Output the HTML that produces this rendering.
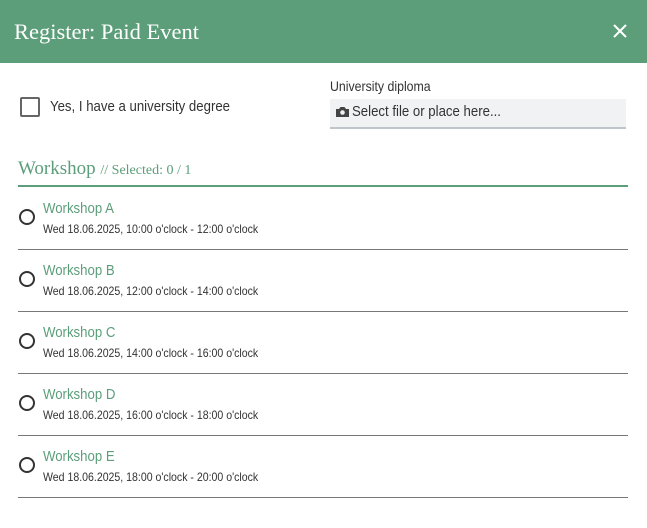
<html><head><style>
body{margin:0;width:647px;height:528px;background:#fff;font-family:"Liberation Sans",sans-serif;position:relative;overflow:hidden;color:#333}
.hd{position:absolute;left:0;top:0;width:647px;height:63px;background:#5b9e79}
.hd .t{position:absolute;left:14px;top:19px;font:22.5px "Liberation Serif",serif;color:#fff}
.a,.n,.d{position:absolute;white-space:nowrap;transform:scaleX(0.88);transform-origin:0 0}
.cb{position:absolute;left:20px;top:97px;width:16px;height:16px;border:2px solid #666;border-radius:2px}
.fi{position:absolute;left:330px;top:99px;width:296px;height:28px;background:#f1f2f4;border-bottom:2px solid #c0c4cb}
.it{position:absolute;left:18px;width:610px;height:62px;border-bottom:1px solid #777}
.r{position:absolute;left:1px;top:22px;width:12px;height:12px;border:2px solid #333;border-radius:50%}
.n{left:25px;top:13px;font-size:15px;color:#5b9e79}
.d{left:25px;top:35px;font-size:12px;color:#333}
</style></head><body>
<div class="hd"><div class="t">Register: Paid Event</div>
<svg style="position:absolute;left:613px;top:24px" width="14" height="14"><path d="M1 1L13 13M13 1L1 13" stroke="#fff" stroke-width="2"/></svg></div>
<div class="cb"></div>
<div class="a" style="left:50px;top:98px;font-size:15px">Yes, I have a university degree</div>
<div class="a" style="left:330px;top:78px;font-size:14px">University diploma</div>
<div class="fi"><svg style="position:absolute;left:6px;top:7px" width="13" height="11"><path d="M0 3h3l1.5-2h4L10 3h3v8H0z" fill="#444"/><circle cx="6.5" cy="6.5" r="2.3" fill="#f1f2f4"/></svg>
<div class="a" style="left:22px;top:4px;font-size:15px">Select file or place here...</div></div>
<div style="position:absolute;white-space:nowrap;left:18px;top:158px;font:19px 'Liberation Serif',serif;color:#5b9e79">Workshop <span style="font-size:14px">// Selected: 0 / 1</span></div>
<div style="position:absolute;left:18px;top:185px;width:610px;height:2px;background:#5b9e79"></div>
<div class="it" style="top:187px"><div class="r"></div><div class="n">Workshop A</div><div class="d">Wed 18.06.2025, 10:00 o'clock - 12:00 o'clock</div></div>
<div class="it" style="top:249px"><div class="r"></div><div class="n">Workshop B</div><div class="d">Wed 18.06.2025, 12:00 o'clock - 14:00 o'clock</div></div>
<div class="it" style="top:311px"><div class="r"></div><div class="n">Workshop C</div><div class="d">Wed 18.06.2025, 14:00 o'clock - 16:00 o'clock</div></div>
<div class="it" style="top:373px"><div class="r"></div><div class="n">Workshop D</div><div class="d">Wed 18.06.2025, 16:00 o'clock - 18:00 o'clock</div></div>
<div class="it" style="top:435px"><div class="r"></div><div class="n">Workshop E</div><div class="d">Wed 18.06.2025, 18:00 o'clock - 20:00 o'clock</div></div>
</body></html>
